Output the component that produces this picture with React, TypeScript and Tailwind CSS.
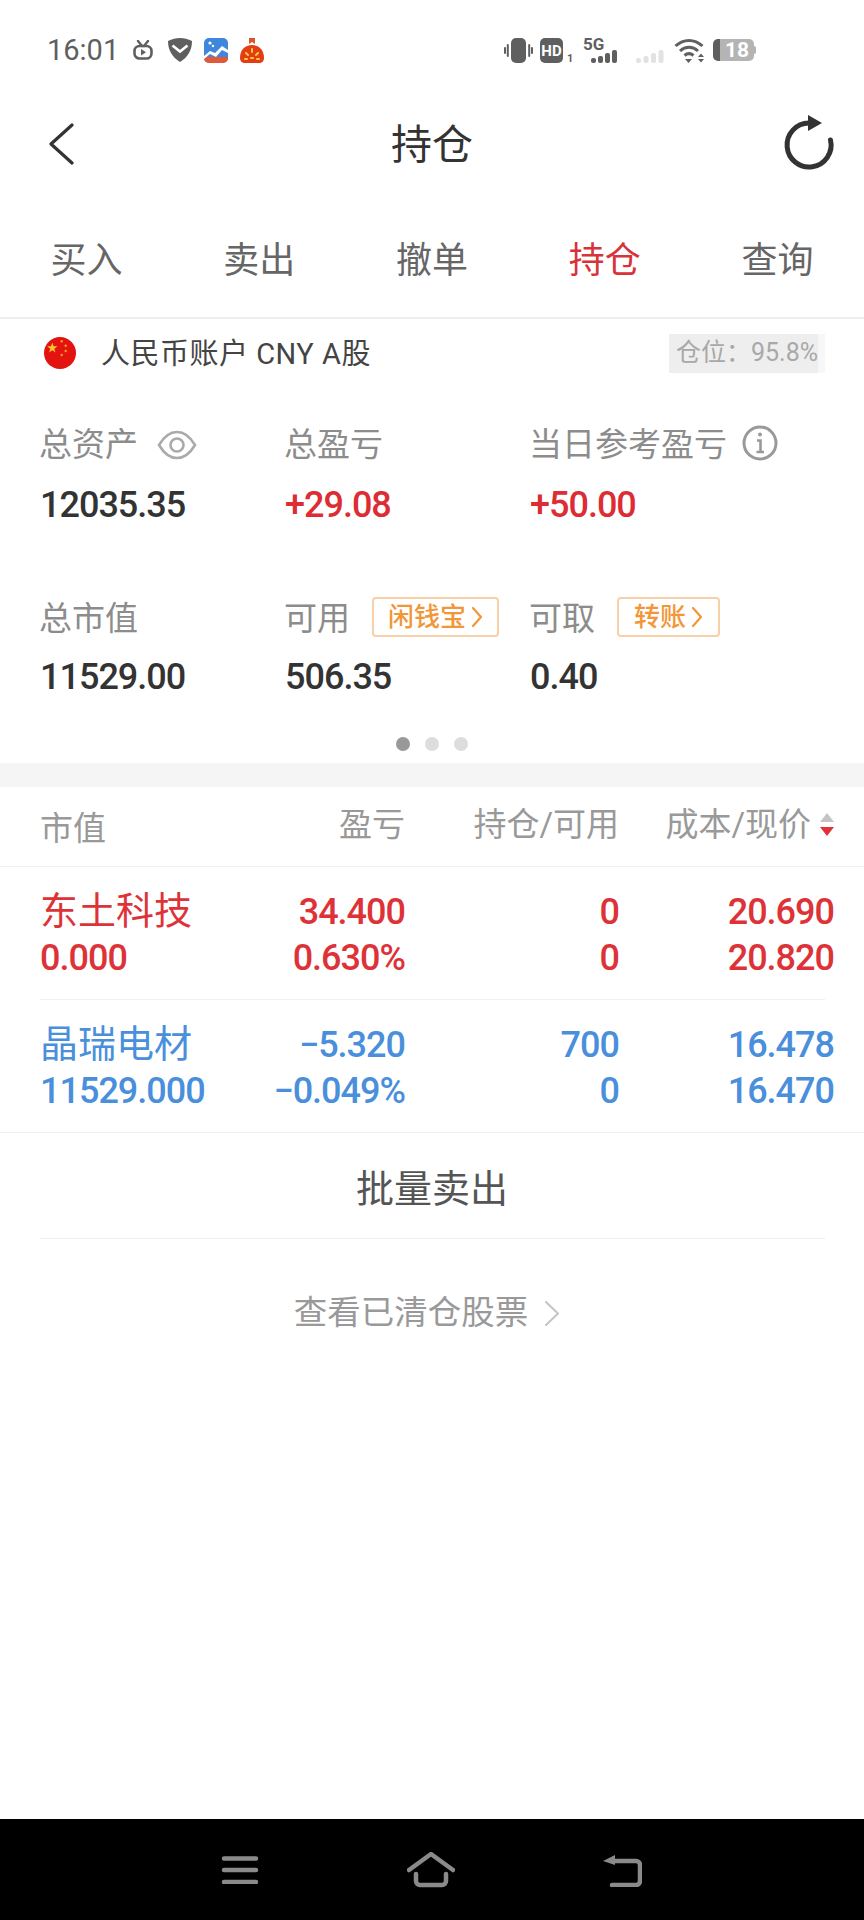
const CJK = 'font-[Roboto,"Noto_Sans_CJK_SC",sans-serif]';

const Stat = ({ label, value, color, extra, tight }: { label: string; value: string; color: string; extra?: React.ReactNode; tight?: boolean }) => (
  <div className="flex flex-col">
    <div className="h-[40px] pt-[1px] -ml-[1px] flex items-center text-[33px] text-[#8c8c8c] whitespace-nowrap">
      {label}
      {extra}
    </div>
    <div className={`${tight ? 'mt-[19px]' : 'mt-[21px]'} h-[40px] flex items-center text-[36px] tracking-[-1px] font-medium whitespace-nowrap ${color}`}>{value}</div>
  </div>
);

const Badge = ({ text, width }: { text: string; width: string }) => (
  <span className={`ml-[22px] ${width} h-[40px] mb-[3px] shrink-0 flex items-center justify-center gap-[5px] border-2 border-[#f9cfa8] rounded-[4px] text-[26px] font-medium text-[#f29638]`}>
    {text}
    <svg width="12" height="22" viewBox="0 0 12 22" fill="none" stroke="#f29638" strokeWidth="2.200" strokeLinecap="round" strokeLinejoin="round">
      <path d="M2 2l8 9-8 9" />
    </svg>
  </span>
);

const Holding = ({ color, name, rows }: { color: string; name: string; rows: string[][] }) => (
  <div className={`pl-[40px] pr-[30px] pt-[17px] pb-[21px] ${color}`}>
    {rows.map((r, i) => (
      <div key={i} className="grid grid-cols-[165px_200px_214px_215px] h-[47px] items-center text-right text-[36px] tracking-[-1px] font-medium whitespace-nowrap">
        {i === 0 ? <div className="text-left text-[38px] tracking-normal font-normal -mt-[1px]">{name}</div> : <div className="text-left">{r[0]}</div>}
        <div>{r[1]}</div>
        <div>{r[2]}</div>
        <div>{r[3]}</div>
      </div>
    ))}
  </div>
);

const Divider = () => <div className="ml-[40px] mr-[39px] h-px bg-[#efefef]" />;

const StatusBar = () => (
  <div className="h-[100px] pl-[47px] flex items-center text-[#5f5f5f]">
    <span className="w-[86px] text-[29px] leading-none">16:01</span>
    <svg width="20" height="20" viewBox="0 0 20 20" className="shrink-0">
      <path d="M5 1l4 5M15 1l-4 5" stroke="#5f5f5f" strokeWidth="2.400" strokeLinecap="round" />
      <rect x="1.500" y="6" width="17" height="12.500" rx="5" fill="none" stroke="#5f5f5f" strokeWidth="2.600" />
      <path d="M8 9l5 3.200-5 3.200z" fill="#5f5f5f" />
    </svg>
    <svg width="24" height="24" viewBox="0 0 24 24" className="ml-[15px] shrink-0">
      <path d="M12 0c4 0 8 1 12 3 0 9-4 16-12 21C4 19 0 12 0 3c4-2 8-3 12-3z" fill="#5f5f5f" />
      <path d="M4.500 7.500l7.500 6 7.500-6" fill="none" stroke="#fff" strokeWidth="2.600" />
    </svg>
    <svg width="24" height="25" viewBox="0 0 24 25" className="ml-[12px] shrink-0">
      <rect width="24" height="25" rx="5" fill="#3f87dc" />
      <path d="M0 19h24v1a5 5 0 0 1-5 5H5a5 5 0 0 1-5-5z" fill="#e4583a" />
      <path d="M0 18l6-5 5 2 7-7 6 4v3l-6-3-6 7-6-3-6 5z" fill="#fff" />
      <circle cx="6" cy="5" r="1.600" fill="#fff" />
      <circle cx="9" cy="8" r="1.200" fill="#fff" />
    </svg>
    <svg width="24" height="25" viewBox="0 0 24 25" className="ml-[12px] shrink-0">
      <path d="M9 0h6v6l-3-2-3 2z" fill="#d9552f" />
      <path d="M12 7c7 0 12 5 12 13 0 3-2 5-5 5H5c-3 0-5-2-5-5C0 12 5 7 12 7z" fill="#e33e12" />
      <path d="M12 11v3M6 15l2 2M18 15l-2 2M5 21h2M17 21h2M11 20h2" stroke="#ffc74a" strokeWidth="2" strokeLinecap="round" />
    </svg>
    <div className="flex-1" />
    <svg width="29" height="25" viewBox="0 0 29 25" className="shrink-0">
      <rect x="7" y="0" width="15" height="25" rx="5" fill="#5f5f5f" />
      <path d="M3.800 7v11M1 10v5M25.200 7v11M28 10v5" stroke="#5f5f5f" strokeWidth="2" strokeLinecap="round" />
    </svg>
    <svg width="33" height="33" viewBox="0 0 33 33" className="ml-[7px] shrink-0">
      <rect y="4" width="23" height="25" rx="5" fill="#5f5f5f" />
      <text x="11.500" y="22" textAnchor="middle" fontSize="15" fontWeight="700" fill="#fff" fontFamily="Roboto">HD</text>
      <text x="27" y="28" fontSize="11" fontWeight="700" fill="#5f5f5f" fontFamily="Roboto">1</text>
    </svg>
    <svg width="36" height="38" viewBox="0 0 36 38" className="ml-[10px] shrink-0">
      <text x="0" y="19" fontSize="17" fontWeight="700" fill="#5f5f5f" fontFamily="Roboto">5G</text>
      <rect x="8" y="27" width="5" height="5" rx="2" fill="#5f5f5f" />
      <rect x="15" y="25" width="5" height="7" rx="2" fill="#5f5f5f" />
      <rect x="22" y="22" width="5" height="10" rx="2" fill="#5f5f5f" />
      <rect x="29" y="19" width="5" height="13" rx="2" fill="#5f5f5f" />
    </svg>
    <svg width="28" height="13" viewBox="0 0 28 13" className="ml-[17px] mt-[12px] shrink-0">
      <rect x="0" y="8" width="5" height="5" rx="2" fill="#e2e2e2" />
      <rect x="7.500" y="6" width="5" height="7" rx="2" fill="#e2e2e2" />
      <rect x="15" y="3" width="5" height="10" rx="2" fill="#e2e2e2" />
      <rect x="22.500" y="0" width="5" height="13" rx="2" fill="#e2e2e2" />
    </svg>
    <svg width="30" height="25" viewBox="0 0 30 25" className="ml-[10px] shrink-0">
      <path d="M1.500 8c8-7.500 19-7.500 27 0M6 13c5.500-5 12.500-5 18 0M10.500 17.500c3-2.500 6-2.500 9 0" fill="none" stroke="#5f5f5f" strokeWidth="3" />
      <path d="M11 21h7l-3.500 4zM24 19l3-3.500 3 3.500zM24 21l3 3.500 3-3.500z" fill="#5f5f5f" />
    </svg>
    <div className="ml-[9px] mr-[108px] flex items-center shrink-0">
      <div className="w-[41px] h-[22px] flex rounded-[5px] overflow-hidden">
        <div className="w-[7px] bg-[#5f5f5f]" />
        <div className="flex-1 bg-[#b4b4b4] flex items-center justify-center text-white text-[21px] font-bold leading-none">18</div>
      </div>
      <div className="w-[2px] h-[8px] rounded-r-[2px] bg-[#b4b4b4]" />
    </div>
  </div>
);

export default function App() {
  return (
    <div className={`h-[1920px] bg-white flex flex-col overflow-hidden ${CJK}`}>
      <StatusBar />

      <div className="h-[88px] pl-[47px] pr-[28px] flex items-center justify-between">
        <svg width="28" height="42" viewBox="0 0 28 42" fill="none" stroke="#333" strokeWidth="3.200" strokeLinecap="round" strokeLinejoin="round">
          <path d="M25 2L4 21l21 19" />
        </svg>
        <span className="text-[41px] text-[#333] mt-[3px] ml-[9px]">持仓</span>
        <svg width="56" height="60" viewBox="0 0 56 60" fill="none" className="-mt-[4px]">
          <path d="M50.500 28A22 22 0 1 1 29 11" stroke="#333" strokeWidth="5" strokeLinecap="round" />
          <path d="M28 3l14 8-14 8z" fill="#333" />
        </svg>
      </div>

      <div className="h-[131px] pt-[16px] grid grid-cols-5 items-center text-center text-[36px] text-[#666] border-b-2 border-[#eeeeee]">
        <span>买入</span>
        <span>卖出</span>
        <span>撤单</span>
        <span className="text-[#d9333a]">持仓</span>
        <span>查询</span>
      </div>

      <div className="h-[68px] pl-[44px] pr-[39px] flex items-center">
        <svg width="32" height="32" viewBox="0 0 32 32" className="shrink-0">
          <circle cx="16" cy="16" r="16" fill="#e3130f" />
          <path d="M8.300 5.500l1.300 3.800h3.900l-3.200 2.500 1.200 3.700-3.200-2.300-3.200 2.300 1.200-3.700-3.200-2.500H7z" fill="#f7c531" />
          <circle cx="17.700" cy="4.300" r="1.200" fill="#f6a020" />
          <circle cx="21.700" cy="8.700" r="1.200" fill="#f6a020" />
          <circle cx="21.700" cy="14" r="1.200" fill="#f6a020" />
          <circle cx="17.700" cy="18" r="1.200" fill="#f6a020" />
        </svg>
        <span className="ml-[25px] mt-[3px] text-[29px] tracking-[0.5px] text-[#444] whitespace-nowrap">人民币账户 CNY A股</span>
        <div className="ml-auto h-[39px] w-[156px] pl-[7px] border-r-[7px] border-[#f7f7f7] bg-[#eeeeee] flex items-center text-[25px] text-[#a8a8a8] whitespace-nowrap">仓位：95.8%</div>
      </div>

      <div className="pl-[40px] pt-[37px] grid grid-cols-[245px_245px_1fr] gap-y-[73px]">
        <Stat
          label="总资产"
          value="12035.35"
          color="text-[#333]"
          extra={
            <svg width="40" height="30" viewBox="0 0 40 30" fill="none" stroke="#aaa" strokeWidth="2.600" className="ml-[19px]">
              <path d="M2 15C7 6.500 13 2 20 2s13 4.500 18 13c-5 8.500-11 13-18 13S7 23.500 2 15z" />
              <circle cx="20" cy="15" r="6.500" />
            </svg>
          }
        />
        <Stat label="总盈亏" value="+29.08" color="text-[#dd2c33]" />
        <Stat
          label="当日参考盈亏"
          value="+50.00"
          color="text-[#dd2c33]"
          extra={
            <svg width="36" height="36" viewBox="0 0 36 36" fill="none" stroke="#999" strokeWidth="3" className="ml-[15px] -mt-[4px]">
              <circle cx="18" cy="18" r="16" />
              <path d="M15 15.500h3.500V27M14.500 27h7.500" strokeWidth="2.600" />
              <circle cx="18" cy="9.500" r="2" fill="#999" stroke="none" />
            </svg>
          }
        />
        <Stat label="总市值" value="11529.00" color="text-[#333]" tight />
        <Stat label="可用" value="506.35" color="text-[#333]" tight extra={<Badge text="闲钱宝" width="w-[127px]" />} />
        <Stat label="可取" value="0.40" color="text-[#333]" tight extra={<Badge text="转账" width="w-[103px]" />} />
      </div>

      <div className="mt-[40px] h-[14px] flex justify-center gap-[15px]">
        <div className="w-[14px] h-[14px] rounded-full bg-[#999]" />
        <div className="w-[14px] h-[14px] rounded-full bg-[#ddd]" />
        <div className="w-[14px] h-[14px] rounded-full bg-[#ddd]" />
      </div>

      <div className="mt-[12px] h-[24px] shrink-0 bg-[#f5f5f5]" />

      <div className="h-[80px] shrink-0 pl-[40px] pr-[30px] grid grid-cols-[165px_200px_214px_215px] items-center text-right text-[33px] text-[#999] border-b border-[#f0f0f0] whitespace-nowrap">
        <span className="text-left mt-[4px]">市值</span>
        <span className="-mt-[3px]">盈亏</span>
        <span className="-mt-[3px]">持仓/可用</span>
        <span className="-mt-[3px] flex items-center justify-end">
          成本/现价
          <svg width="14" height="24" viewBox="0 0 14 24" className="ml-[9px]">
            <path d="M7 0l7 9H0z" fill="#c4c4c4" />
            <path d="M0 14h14l-7 9z" fill="#e23239" />
          </svg>
        </span>
      </div>

      <Holding
        color="text-[#dd3338]"
        name="东土科技"
        rows={[
          ['', '34.400', '0', '20.690'],
          ['0.000', '0.630%', '0', '20.820'],
        ]}
      />
      <Divider />
      <Holding
        color="text-[#4a8fdb]"
        name="晶瑞电材"
        rows={[
          ['', '−5.320', '700', '16.478'],
          ['11529.000', '−0.049%', '0', '16.470'],
        ]}
      />
      <div className="h-px bg-[#f0f0f0]" />

      <div className="h-[105px] pt-[8px] flex items-center justify-center text-[38px] text-[#555]">批量卖出</div>
      <Divider />

      <div className="h-[142px] pt-[6px] pr-[10px] flex items-center justify-center gap-[16px] text-[33.500px] text-[#999]">
        查看已清仓股票
        <svg width="16" height="27" viewBox="0 0 16 27" fill="none" stroke="#c4c4c4" strokeWidth="2" strokeLinecap="round" strokeLinejoin="round">
          <path d="M2 2l12 11.500L2 25" />
        </svg>
      </div>

      <div className="flex-1" />

      <div className="h-[101px] bg-black flex items-center justify-between pl-[220px] pr-[222px]">
        <svg width="40" height="28" viewBox="0 0 40 28" fill="none" stroke="#8a8a8a" strokeWidth="4.500" strokeLinecap="round">
          <path d="M4 2.500h32M4 14h32M4 26h32" />
        </svg>
        <svg width="48" height="36" viewBox="0 0 48 36" fill="none" stroke="#8a8a8a" strokeWidth="4.500" strokeLinecap="round" strokeLinejoin="round">
          <path d="M2 18L24 2l22 16" />
          <path d="M9 22v7a4 4 0 0 0 4 4h22a4 4 0 0 0 4-4v-7" />
        </svg>
        <svg width="40" height="34" viewBox="0 0 40 34" fill="none" stroke="#8a8a8a" strokeWidth="4.500" strokeLinecap="round" strokeLinejoin="round">
          <path d="M11 8h23a4 4 0 0 1 4 4v16a4 4 0 0 1-4 4H10" />
          <path d="M1 8l12-6v10z" fill="#8a8a8a" stroke="none" />
        </svg>
      </div>
    </div>
  );
}
